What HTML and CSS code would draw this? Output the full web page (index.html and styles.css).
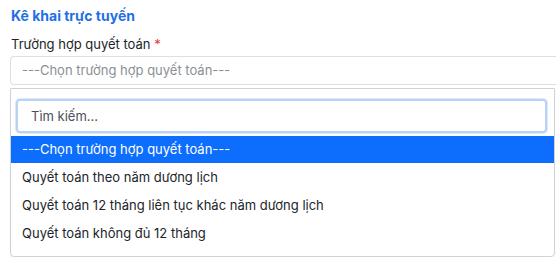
FILE: index.html
```html
<!DOCTYPE html>
<html lang="vi">
<head>
<meta charset="utf-8">
<link rel="stylesheet" href="styles.css">
</head>
<body>
<div class="page">
  <h2 class="title">Kê khai trực tuyến</h2>
  <label class="label">Trường hợp quyết toán <span class="req">*</span></label>
  <div class="select">---Chọn trường hợp quyết toán---</div>
  <div class="dropdown">
    <div class="search-wrap">
      <div class="search">Tìm kiếm...</div>
    </div>
    <ul class="options">
      <li class="opt active">---Chọn trường hợp quyết toán---</li>
      <li class="opt">Quyết toán theo năm dương lịch</li>
      <li class="opt">Quyết toán 12 tháng liên tục khác năm dương lịch</li>
      <li class="opt">Quyết toán không đủ 12 tháng</li>
    </ul>
  </div>
</div>
</body>
</html>
```
FILE: styles.css
```css
html, body {
  margin: 0;
  padding: 0;
  background: #fff;
  overflow: hidden;
}
body {
  font-family: Inter, "Noto Sans", sans-serif;
  font-size: 13px;
  color: #212529;
}
* {
  box-sizing: border-box;
}
.page {
  padding: 7px 0 0 10px;
}
.title {
  margin: 0 0 0 1px;
  font-size: 14px;
  font-weight: 700;
  color: #1f6fe5;
  line-height: 18px;
}
.label {
  display: block;
  margin: 10px 0 0 1px;
  font-size: 13px;
  line-height: 18px;
  color: #212529;
}
.req {
  color: #e5383b;
}
.select {
  margin-top: 3px;
  height: 29px;
  border: 1px solid #dcdfe3;
  border-right: 0;
  border-radius: 4px 0 0 4px;
  padding-left: 11px;
  line-height: 27px;
  color: #8a8f95;
}
.dropdown {
  margin-top: 3px;
  width: 545px;
  border: 1px solid #cfd3d8;
  border-radius: 0 0 4px 4px;
  box-shadow: 0 1px 2px rgba(0,0,0,0.06);
  padding-bottom: 9px;
}
.search-wrap {
  padding: 10px 7px 3px 5px;
}
.search {
  height: 34px;
  border: 2px solid #b8d2f5;
  border-radius: 4px;
  padding-left: 13px;
  line-height: 30px;
  color: #495057;
  box-shadow: 0 0 0 1px #dde9fb;
}
.options {
  list-style: none;
  margin: 0;
  padding: 0;
}
.opt {
  height: 28px;
  line-height: 28px;
  padding-left: 11px;
  color: #212529;
}
.opt.active {
  height: 27px;
  line-height: 27px;
  background: #0d6efd;
  color: #fff;
}
```
